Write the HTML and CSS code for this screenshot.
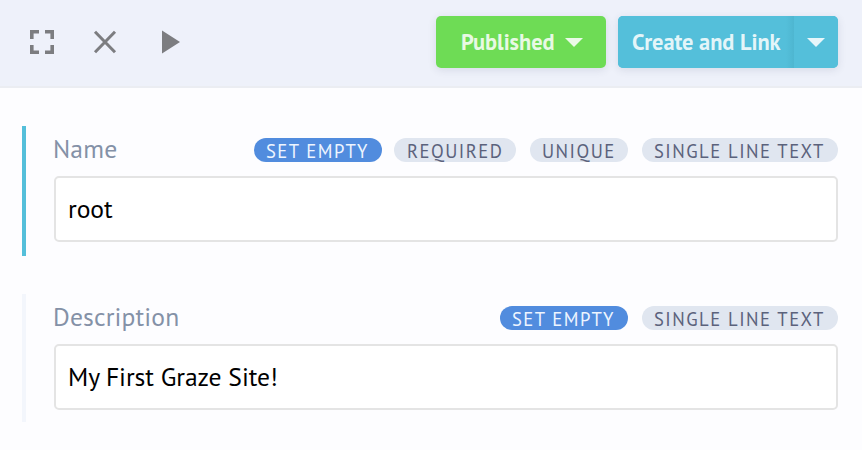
FILE: index.html
```html
<!DOCTYPE html>
<html lang="en">
<head>
<meta charset="utf-8">
<title>Create and Link</title>
<link rel="stylesheet" href="styles.css">
</head>
<body>
<header class="toolbar">
  <div class="tools">
    <svg class="tool" width="24" height="24" viewBox="0 0 24 24"><path d="M1.8 9V1.8H9M15 1.8h7.2V9M22.2 15v7.2H15M9 22.2H1.8V15" fill="none" stroke="#7c7d80" stroke-width="3.6"/></svg>
    <svg class="tool close" width="24" height="24" viewBox="0 0 24 24"><path d="M2 1.7L22 22.3M22 1.7L2 22.3" fill="none" stroke="#7c7d80" stroke-width="3"/></svg>
    <svg class="tool play" width="18" height="24" viewBox="0 0 18 24"><path d="M0 .5L18 12 0 23.5z" fill="#7c7d80"/></svg>
  </div>
  <div class="actions">
    <button class="btn published"><span class="published-text">Published</span><svg width="18" height="9" viewBox="0 0 18 9"><path d="M0 0h18L9 9z" fill="currentColor"/></svg></button>
    <div class="split">
      <button class="btn create"><span class="create-text">Create and Link</span></button>
      <button class="btn more" aria-label="More"><svg width="18" height="9" viewBox="0 0 18 9"><path d="M0 0h18L9 9z" fill="currentColor"/></svg></button>
    </div>
  </div>
</header>
<main>
  <section class="field active">
    <div class="head">
      <label for="name">Name</label>
      <div class="tags">
        <span class="tag empty">SET EMPTY</span>
        <span class="tag required">REQUIRED</span>
        <span class="tag unique">UNIQUE</span>
        <span class="tag text-type">SINGLE LINE TEXT</span>
      </div>
    </div>
    <input id="name" value="root">
  </section>
  <section class="field second">
    <div class="head">
      <label for="description">Description</label>
      <div class="tags">
        <span class="tag empty">SET EMPTY</span>
        <span class="tag text-type">SINGLE LINE TEXT</span>
      </div>
    </div>
    <input id="description" value="My First Graze Site!">
  </section>
</main>
</body>
</html>
```
FILE: styles.css
```css
* { box-sizing: border-box; }
body {
  margin: 0;
  height: 450px;
  overflow: hidden;
  background: #fdfdff;
  font-family: "PT Sans", "Noto Sans", sans-serif;
}
.toolbar {
  display: flex;
  justify-content: space-between;
  height: 88px;
  padding: 16px 24px 0 30px;
  background: #eef1fa;
  border-bottom: 2px solid #ebedf2;
}
.tools { display: flex; padding-top: 14px; }
.tool { display: block; }
.close { margin-left: 39px; }
.play { margin-left: 45px; }
.actions { display: flex; align-items: flex-start; gap: 12px; }
.btn {
  display: flex;
  align-items: center;
  height: 52px;
  padding: 0;
  border: 0;
  color: rgba(255, 255, 255, .86);
  font: 700 22.4px "PT Sans", "Noto Sans", sans-serif;
  letter-spacing: -.04px;
  white-space: nowrap;
}
.published {
  width: 170px;
  padding-left: 25px;
  border-radius: 5px;
  background: #6edc55;
  box-shadow: 0 2px 8px rgba(50, 60, 90, .12);
}
.published-text, .create-text { padding-bottom: 2px; }
.published-text { width: 104px; text-align: left; }
.split {
  display: flex;
  height: 52px;
  border-radius: 5px;
  overflow: hidden;
  background: #54bfda;
  box-shadow: 0 2px 8px rgba(50, 60, 90, .12);
}
.create {
  width: 176px;
  padding-left: 14px;
  background: linear-gradient(to right, #54bfda 168px, #4eb6d0 176px);
}
.more { width: 44px; justify-content: center; background: #54bfda; }
main { padding: 38px 24px 0 22px; }
.field {
  height: 130px;
  padding: 12px 0 0 28px;
  border-left: 4px solid #f3f6fc;
}
.active { border-left-color: #54bfda; }
.second { height: 128px; margin-top: 38px; }
.head { display: flex; justify-content: space-between; height: 38px; }
label {
  margin-left: -1px;
  color: #8491a7;
  font-size: 25.6px;
  letter-spacing: .15px;
  line-height: 21px;
  white-space: nowrap;
}
.tags { display: flex; }
.tag {
  height: 24px;
  margin-left: 14px;
  padding-left: 12px;
  border-radius: 12px;
  background: #e0e6f0;
  color: #5b627c;
  font-size: 18.6px;
  letter-spacing: 1.48px;
  line-height: 27px;
  white-space: nowrap;
}
.empty { width: 128px; background: #518cde; color: #eef5ff; }
.required { width: 122px; margin-left: 12px; padding-left: 13px; }
.unique { width: 98px; }
.text-type { width: 196px; }
input {
  display: block;
  width: 100%;
  height: 66px;
  margin: 0;
  padding: 0 12px 1px;
  border: 2px solid #e4e4e4;
  border-radius: 5px;
  outline: 0;
  background: #fff;
  color: #000;
  font: 25.6px "PT Sans", "Noto Sans", sans-serif;
  letter-spacing: -.05px;
}
```
